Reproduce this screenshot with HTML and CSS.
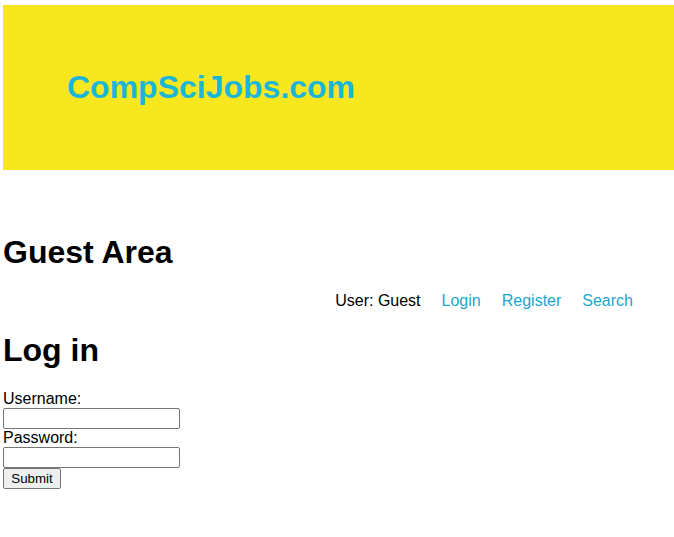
FILE: index.html
```html
<!DOCTYPE html>
<html>
<head>
<meta charset="utf-8">
<title>CompSciJobs.com</title>
<link rel="stylesheet" href="styles.css">
</head>
<body>
<header class="banner">
  <div class="brand">CompSciJobs.com</div>
</header>
<h1 class="area-title">Guest Area</h1>
<nav class="nav">
  <span class="user">User: Guest</span>
  <a class="nav-link" href="#">Login</a>
  <a class="nav-link" href="#">Register</a>
  <a class="nav-link" href="#">Search</a>
</nav>
<h1 class="page-title">Log in</h1>
<form class="login">
  <label class="field-label">Username:</label>
  <input class="field" type="text">
  <label class="field-label">Password:</label>
  <input class="field" type="password">
  <button class="submit" type="button">Submit</button>
</form>
</body>
</html>
```
FILE: styles.css
```css
html, body {
  overflow: hidden;
}
body {
  margin: 5px 0 0 3px;
  font-family: "Liberation Sans", Arial, sans-serif;
  font-size: 16px;
  color: #000;
  background: #fff;
}
.banner {
  background: #f7e71e;
  height: 165px;
  display: flex;
  align-items: center;
  padding-left: 64px;
}
.brand {
  font-size: 32px;
  font-weight: bold;
  color: #19b6d8;
  margin-top: -1px;
}
.area-title {
  font-size: 32px;
  font-weight: bold;
  margin: 64px 0 0 0;
  line-height: 37px;
}
.nav {
  display: flex;
  justify-content: flex-end;
  gap: 21px;
  padding-right: 41px;
  margin-top: 21px;
  line-height: 18px;
}
.nav-link {
  color: #1ba6d0;
  text-decoration: none;
}
.page-title {
  font-size: 32px;
  font-weight: bold;
  margin: 22px 0 21px 0;
  line-height: 37px;
}
.login {
  display: flex;
  flex-direction: column;
  align-items: flex-start;
}
.field-label {
  line-height: 18px;
}
.field {
  width: 177px;
  height: 21px;
  box-sizing: border-box;
  margin: 0;
  border: 1px solid #767676;
  border-radius: 2px;
  font-size: 13.33px;
}
.submit {
  margin: 0;
  width: 58px;
  height: 21px;
  box-sizing: border-box;
  font-family: "Liberation Sans", Arial, sans-serif;
  font-size: 13.33px;
  padding: 0;
  background: #efefef;
  border: 1px solid #767676;
  border-radius: 2px;
  color: #000;
}
```
